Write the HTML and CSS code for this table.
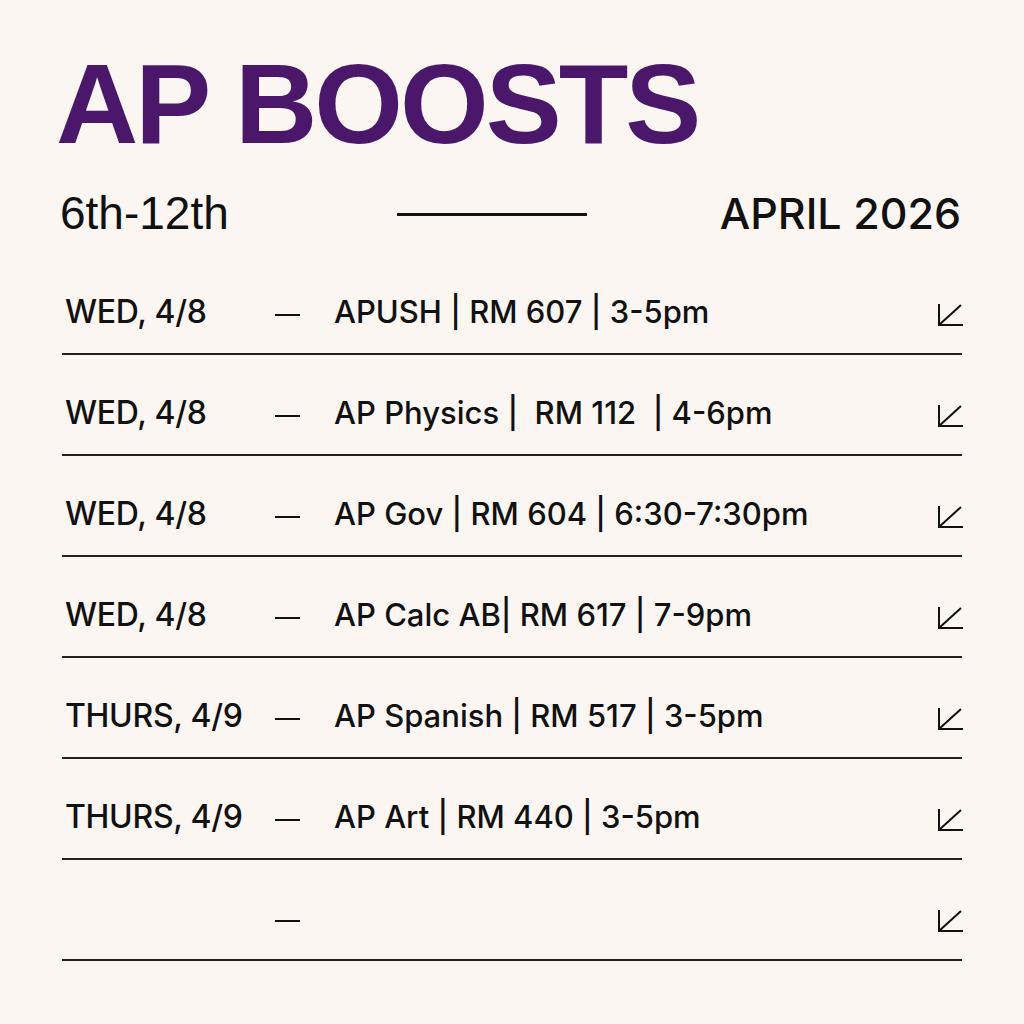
FILE: index.html
```html
<!DOCTYPE html>
<html>
<head>
<meta charset="utf-8">
<link rel="stylesheet" href="styles.css">
</head>
<body>
<main class="page">
  <h1 class="title">AP BOOSTS</h1>
  <div class="sub">
    <span class="grade">6th-12th</span>
    <span class="rule"></span>
    <span class="month">APRIL 2026</span>
  </div>
  <ul class="list">
    <li class="row"><span class="date">WED, 4/8</span><span class="dash"></span><span class="event">APUSH | RM 607 | 3-5pm</span><svg class="arrow" viewBox="0 0 26 24"><path d="M2 1V22H26M2 22L24 2" fill="none" stroke="#111" stroke-width="2"/></svg></li>
    <li class="row"><span class="date">WED, 4/8</span><span class="dash"></span><span class="event">AP Physics |&nbsp; RM 112 &nbsp;| 4-6pm</span><svg class="arrow" viewBox="0 0 26 24"><path d="M2 1V22H26M2 22L24 2" fill="none" stroke="#111" stroke-width="2"/></svg></li>
    <li class="row"><span class="date">WED, 4/8</span><span class="dash"></span><span class="event">AP Gov | RM 604 | 6:30-7:30pm</span><svg class="arrow" viewBox="0 0 26 24"><path d="M2 1V22H26M2 22L24 2" fill="none" stroke="#111" stroke-width="2"/></svg></li>
    <li class="row"><span class="date">WED, 4/8</span><span class="dash"></span><span class="event">AP Calc AB| RM 617 | 7-9pm</span><svg class="arrow" viewBox="0 0 26 24"><path d="M2 1V22H26M2 22L24 2" fill="none" stroke="#111" stroke-width="2"/></svg></li>
    <li class="row"><span class="date">THURS, 4/9</span><span class="dash"></span><span class="event">AP Spanish | RM 517 | 3-5pm</span><svg class="arrow" viewBox="0 0 26 24"><path d="M2 1V22H26M2 22L24 2" fill="none" stroke="#111" stroke-width="2"/></svg></li>
    <li class="row"><span class="date">THURS, 4/9</span><span class="dash"></span><span class="event">AP Art | RM 440 | 3-5pm</span><svg class="arrow" viewBox="0 0 26 24"><path d="M2 1V22H26M2 22L24 2" fill="none" stroke="#111" stroke-width="2"/></svg></li>
    <li class="row"><span class="date"></span><span class="dash"></span><span class="event"></span><svg class="arrow" viewBox="0 0 26 24"><path d="M2 1V22H26M2 22L24 2" fill="none" stroke="#111" stroke-width="2"/></svg></li>
  </ul>
</main>
</body>
</html>
```

FILE: styles.css
```css
html, body {
  margin: 0;
  padding: 0;
  background: #fbf6f2;
}
.page {
  width: 1024px;
  height: 1024px;
  box-sizing: border-box;
  padding: 42px 62px 0 62px;
  color: #111;
  font-family: Inter, "Liberation Sans", sans-serif;
}
.title {
  margin: 0 0 0 -6px;
  font-family: "Liberation Sans", Arial, sans-serif;
  font-weight: 700;
  font-size: 114px;
  line-height: 124px;
  letter-spacing: -3px;
  color: #4a176b;
}
.sub {
  display: flex;
  align-items: center;
  height: 68px;
  margin-top: 13px;
}
.grade {
  width: 337px;
  margin-left: -2px;
  font-family: "Liberation Sans", Arial, sans-serif;
  font-size: 46px;
}
.rule {
  width: 190px;
  height: 3px;
  margin-top: 2px;
  background: #111;
}
.month {
  flex: 1;
  text-align: right;
  font-size: 43px;
  font-weight: 500;
  margin-right: 1px;
}
.list {
  list-style: none;
  margin: 7px 0 0 0;
  padding: 0;
}
.row {
  display: flex;
  align-items: center;
  height: 101px;
  box-sizing: border-box;
  padding-top: 15px;
  border-bottom: 2px solid #222;
  font-size: 31px;
  font-weight: 500;
}
.date {
  width: 213px;
  padding-left: 3px;
  box-sizing: border-box;
  font-size: 32px;
  letter-spacing: -0.3px;
}
.dash {
  width: 25px;
  height: 2px;
  background: #111;
  margin-right: 34px;
  margin-top: 7px;
}
.event {
  flex: 1;
}
.arrow {
  width: 26px;
  height: 24px;
  margin-right: -1px;
  margin-top: 7px;
}
```
